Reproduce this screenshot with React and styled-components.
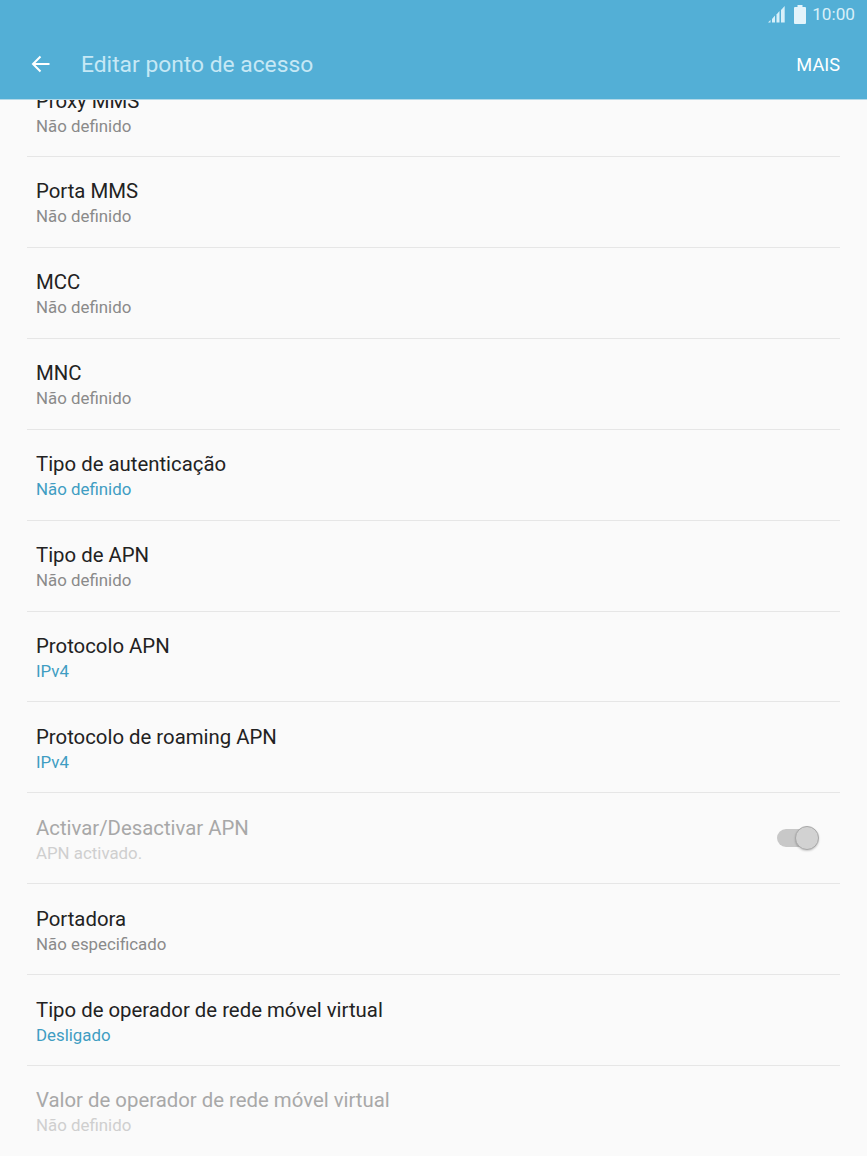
import React from "react";
import styled, { createGlobalStyle } from "styled-components";

const Global = createGlobalStyle`
  html, body { margin: 0; padding: 0; background: #fafafa; }
  body { font-family: Roboto, "Noto Sans", sans-serif; }
`;

const Screen = styled.div`
  width: 867px;
  height: 1156px;
  display: flex;
  flex-direction: column;
  overflow: hidden;
  background: #fafafa;
`;

const Header = styled.header`
  flex: none;
  height: 99px;
  background: #53afd6;
  border-bottom: 1px solid #b4d9e8;
  display: flex;
  flex-direction: column;
  position: relative;
  z-index: 1;
`;

const StatusBar = styled.div`
  height: 28px;
  display: flex;
  align-items: center;
  justify-content: flex-end;
  padding-right: 12px;
  color: #d8f0f9;
  font-size: 17.2px;
  gap: 6px;
`;

const SignalIcon = styled.svg`
  margin-right: 3px;
`;

const Toolbar = styled.div`
  flex: 1;
  display: flex;
  align-items: center;
  padding: 0 27px 0 31px;
`;

const BackButton = styled.div`
  width: 20px;
  height: 20px;
  display: flex;
  margin-right: 30px;
`;

const Title = styled.div`
  flex: 1;
  color: #c6e8f5;
  font-size: 22.8px;
  padding-top: 2px;
`;

const Action = styled.div`
  color: #ffffff;
  font-size: 18.2px;
  padding-top: 2px;
`;

const Viewport = styled.div`
  flex: 1;
  overflow: hidden;
`;

const List = styled.div`
  margin: -33.85px 27px 0;
`;

const Row = styled.div`
  height: 90.9px;
  box-sizing: border-box;
  border-bottom: 1px solid #e6e6e6;
  padding: 0 21px 0 9px;
  display: flex;
  align-items: center;
  &:last-child { border-bottom-color: transparent; }
`;

const RowText = styled.div`
  flex: 1;
  padding-top: 3px;
`;

const RowTitle = styled.div`
  font-size: 20.35px;
  line-height: 24px;
  margin-bottom: 2px;
  color: ${p => (p.$disabled ? "#a8a8a8" : "#222222")};
`;

const RowValue = styled.div`
  font-size: 16.85px;
  line-height: 22px;
  color: ${p => (p.$disabled ? "#cfcfcf" : p.$accent ? "#3f9dc2" : "#8a8a8a")};
`;

const SwitchTrack = styled.div`
  width: 38px;
  height: 18px;
  border-radius: 9px;
  background: #c8c8c8;
  position: relative;
  margin-right: 4px;
`;

const SwitchThumb = styled.div`
  position: absolute;
  right: -4px;
  top: -3px;
  width: 24px;
  height: 24px;
  box-sizing: border-box;
  border-radius: 50%;
  background: #d2d2d2;
  border: 1px solid #a8a8a8;
  box-shadow: 0 1px 2px rgba(0, 0, 0, 0.2);
`;

const rows = [
  { t: "Proxy MMS", v: "Não definido" },
  { t: "Porta MMS", v: "Não definido" },
  { t: "MCC", v: "Não definido" },
  { t: "MNC", v: "Não definido" },
  { t: "Tipo de autenticação", v: "Não definido", accent: true },
  { t: "Tipo de APN", v: "Não definido" },
  { t: "Protocolo APN", v: "IPv4", accent: true },
  { t: "Protocolo de roaming APN", v: "IPv4", accent: true },
  { t: "Activar/Desactivar APN", v: "APN activado.", disabled: true, toggle: true },
  { t: "Portadora", v: "Não especificado" },
  { t: "Tipo de operador de rede móvel virtual", v: "Desligado", accent: true },
  { t: "Valor de operador de rede móvel virtual", v: "Não definido", disabled: true },
];

const Signal = () => (
  <SignalIcon width="17" height="18" viewBox="0 0 17 18" fill="#d8f0f9">
    <path d="M0 17.500h2.500v-2.500z" />
    <path d="M4 17.500h3V10.500l-3 3.500z" />
    <path d="M8.500 17.500h3V6l-3 3.500z" />
    <path d="M13 17.500h3.700V1L13 5z" />
  </SignalIcon>
);

const Battery = () => (
  <svg width="12" height="19" viewBox="0 0 12 19" fill="#e3f4fb">
    <path d="M3.500 0h5v2h2.500a1 1 0 0 1 1 1v15a1 1 0 0 1-1 1H1a1 1 0 0 1-1-1V3a1 1 0 0 1 1-1h2.500z" />
  </svg>
);

const BackArrow = () => (
  <svg width="20" height="20" viewBox="0 0 20 20" fill="none" stroke="#ffffff" strokeWidth="2">
    <path d="M18.500 10H2M9.500 2.500L2 10l7.500 7.500" />
  </svg>
);

export default function App() {
  return (
    <Screen>
      <Global />
      <Header>
        <StatusBar>
          <Signal />
          <Battery />
          <span>10:00</span>
        </StatusBar>
        <Toolbar>
          <BackButton><BackArrow /></BackButton>
          <Title>Editar ponto de acesso</Title>
          <Action>MAIS</Action>
        </Toolbar>
      </Header>
      <Viewport>
        <List>
          {rows.map(r => (
            <Row key={r.t}>
              <RowText>
                <RowTitle $disabled={r.disabled}>{r.t}</RowTitle>
                <RowValue $disabled={r.disabled} $accent={r.accent}>{r.v}</RowValue>
              </RowText>
              {r.toggle && <SwitchTrack><SwitchThumb /></SwitchTrack>}
            </Row>
          ))}
        </List>
      </Viewport>
    </Screen>
  );
}
